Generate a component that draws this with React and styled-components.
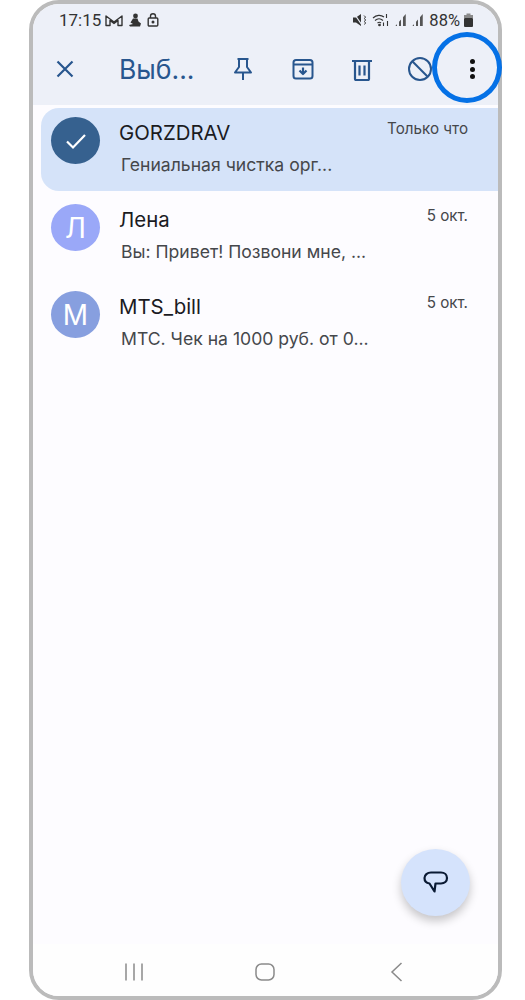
import styled, { createGlobalStyle } from 'styled-components'

const GlobalStyle = createGlobalStyle`
  html, body {
    margin: 0;
    padding: 0;
    background: #ffffff;
  }
  body {
    font-family: Inter, Roboto, "Noto Sans", "Liberation Sans", sans-serif;
  }
`

const chats = [
  { id: 1, name: 'GORZDRAV', time: 'Только что', text: 'Гениальная чистка орг...', selected: true },
  { id: 2, name: 'Лена', letter: 'Л', time: '5 окт.', text: 'Вы: Привет! Позвони мне, ...', color: '#9aa8f8' },
  { id: 3, name: 'MTS_bill', letter: 'M', time: '5 окт.', text: 'МТС. Чек на 1000 руб. от 0...', color: '#879fdf' },
]

const App = () => (
  <>
    <GlobalStyle />
    <Phone>
      <Header>
        <StatusBar>
          <StatusGroup>
            <Clock>17:15</Clock>
            <svg width="18" height="13" viewBox="0 0 18 13" fill="none" stroke="#333" strokeWidth="1.400" strokeLinejoin="round">
              <path d="M1 11.500V2l8 6 8-6v9.500h-4V6.500L9 9.500l-4-3v5z" />
            </svg>
            <svg width="16" height="14" viewBox="0 0 16 14" fill="#333">
              <circle cx="8.500" cy="3" r="2.400" />
              <path d="M6 5.500h4.500l1 3 2.500 2-1 3H3l-1-1.500 4-1-2.500-1.500L6 5.500z" />
            </svg>
            <svg width="12" height="14" viewBox="0 0 12 14" fill="none" stroke="#333" strokeWidth="1.400">
              <rect x="1.200" y="5" width="9.600" height="8" rx="1" />
              <path d="M3.500 5V3.200a2.500 2.500 0 0 1 5 0V5" />
              <circle cx="6" cy="9" r="0.800" fill="#333" />
            </svg>
          </StatusGroup>
          <StatusGroup>
            <svg width="15" height="14" viewBox="0 0 15 14" fill="#333">
              <path d="M0 4.500h3L8 1v12L3 9.500H0z" />
              <path d="M1 0.500l9 13" stroke="#edf0f8" strokeWidth="1.300" />
              <path d="M11 2.500l1.500 1.500-1 1.500 1 1.500-1 1.500 1 1.500-1 1.500" stroke="#333" strokeWidth="1" fill="none" />
            </svg>
            <svg width="19" height="14" viewBox="0 0 19 14" fill="none" stroke="#333" strokeWidth="1.100">
              <path d="M1 5c3.500-3.300 8-3.300 11-1M3 7.500c2.500-2.200 5.500-2.200 8 0M5.500 10c1.200-1 2.500-1 3.500 0" />
              <circle cx="7.500" cy="12" r="0.800" fill="#333" />
              <path d="M14.500 1v4M11.500 9.500v3.500M15.500 8v5" />
            </svg>
            <Signal />
            <Signal />
            <Battery>88%</Battery>
            <svg width="9" height="14" viewBox="0 0 9 14">
              <rect x="2.500" y="0.500" width="4" height="2" fill="#8a8a8a" />
              <rect x="0" y="2" width="9" height="3" fill="#8a8a8a" />
              <rect x="0" y="5" width="9" height="9" rx="1" fill="#333" />
            </svg>
          </StatusGroup>
        </StatusBar>
        <Toolbar>
          <ToolIcon $gap={0}>
            <svg width="20" height="20" viewBox="0 0 20 20" fill="none" stroke="#28568e" strokeWidth="2.200">
              <path d="M2.500 2.500l15 15M17.500 2.500l-15 15" />
            </svg>
          </ToolIcon>
          <Title>Выб...</Title>
          <ToolIcon $gap={40}>
            <svg width="20" height="24" viewBox="0 0 20 24" fill="none" stroke="#28568e" strokeWidth="2" strokeLinejoin="round">
              <path d="M4.500 2h11M6 2v8L2 15.500h16L14 10V2M10 15.500V23" />
            </svg>
          </ToolIcon>
          <ToolIcon $gap={38.500}>
            <svg width="22" height="22" viewBox="0 0 22 22" fill="none" stroke="#28568e" strokeWidth="2" strokeLinejoin="round">
              <rect x="1.500" y="2" width="19" height="18.500" rx="2.500" />
              <path d="M1.500 6.500h19" />
              <path d="M11 9.500v6" strokeWidth="2.200" />
              <path d="M7.500 12.500L11 16l3.500-3.500" strokeWidth="2.200" />
            </svg>
          </ToolIcon>
          <ToolIcon $gap={37.500}>
            <svg width="22" height="23" viewBox="0 0 22 23" fill="none" stroke="#28568e" strokeWidth="2.200" strokeLinejoin="round">
              <path d="M1 3h20M4 3v18a1 1 0 0 0 1 1h12a1 1 0 0 0 1-1V3M8.500 7.500v10M13.500 7.500v10" />
            </svg>
          </ToolIcon>
          <ToolIcon $gap={35}>
            <svg width="24" height="24" viewBox="0 0 24 24" fill="none" stroke="#28568e" strokeWidth="2">
              <circle cx="12" cy="12" r="11" />
              <path d="M4.300 4.300l15.400 15.400" />
            </svg>
          </ToolIcon>
          <MoreDots>
            <i />
            <i />
            <i />
          </MoreDots>
        </Toolbar>
        <Highlight />
      </Header>
      <ChatList>
        {chats.map((chat) => (
          <ChatRow key={chat.id} $selected={chat.selected}>
            {chat.selected ? (
              <Avatar $color="#36618f">
                <svg width="22" height="18" viewBox="0 0 22 18" fill="none" stroke="#fff" strokeWidth="2.200">
                  <path d="M2 9.500l6 6L20 3" />
                </svg>
              </Avatar>
            ) : (
              <Avatar $color={chat.color}>{chat.letter}</Avatar>
            )}
            <ChatBody>
              <ChatTop>
                <ChatName>{chat.name}</ChatName>
                <ChatTime>{chat.time}</ChatTime>
              </ChatTop>
              <ChatText>{chat.text}</ChatText>
            </ChatBody>
          </ChatRow>
        ))}
        <Fab>
          <svg width="26" height="23" viewBox="0 0 26 23" fill="none" stroke="#0a1a33" strokeWidth="2.200" strokeLinejoin="round">
            <path d="M8 1.500h10c3.500 0 6 2.200 6 5.500s-2.500 5.500-6 5.500h-5.500l-1 8-5-8C3.500 12 1.500 10 1.500 7S4.300 1.500 8 1.500z" />
          </svg>
        </Fab>
      </ChatList>
      <NavBar>
        <svg width="20" height="18" viewBox="0 0 20 18" fill="none" stroke="#8a8a8a" strokeWidth="1.500">
          <path d="M2 0.500v17M10 0.500v17M18 0.500v17" />
        </svg>
        <svg width="20" height="18" viewBox="0 0 20 18" fill="none" stroke="#8a8a8a" strokeWidth="1.500">
          <rect x="1" y="1" width="18" height="16" rx="5.500" />
        </svg>
        <svg width="13" height="20" viewBox="0 0 13 20" fill="none" stroke="#8a8a8a" strokeWidth="1.500">
          <path d="M11.500 1L2 10l9.500 9" />
        </svg>
      </NavBar>
    </Phone>
  </>
)

export default App

const Phone = styled.div`
  box-sizing: border-box;
  width: 473px;
  height: 1000px;
  margin-left: 29px;
  border: 4px solid #bbbbbb;
  border-radius: 30px;
  background: #fdfcff;
  display: flex;
  flex-direction: column;
`

const Header = styled.header`
  position: relative;
  height: 101px;
  flex-shrink: 0;
  background: #edf0f8;
  border-radius: 26px 26px 0 0;
`

const StatusBar = styled.div`
  display: flex;
  justify-content: space-between;
  align-items: center;
  height: 32px;
  padding: 0 25px 0 26px;
`

const StatusGroup = styled.div`
  display: flex;
  align-items: center;
  gap: 4px;
`

const Clock = styled.span`
  font-family: Roboto, sans-serif;
  font-size: 17px;
  color: #333333;
`

const Battery = styled.span`
  font-family: Roboto, sans-serif;
  font-size: 16.500px;
  color: #333333;
`

const Signal = styled.span`
  width: 13px;
  height: 12px;
  background: linear-gradient(to right, #555 0 2px, transparent 2px 4px, #555 4px 6px, transparent 6px 8px, #555 8px 10px);
  clip-path: polygon(0 100%, 80% 0, 80% 100%);
`

const Toolbar = styled.div`
  display: flex;
  align-items: center;
  height: 66px;
  padding-left: 22px;
`

const ToolIcon = styled.span`
  display: flex;
  align-items: center;
  justify-content: center;
  margin-left: ${(p) => p.$gap}px;
`

const Title = styled.h1`
  margin: 0 0 0 44px;
  font-size: 26.500px;
  font-weight: 400;
  color: #28568e;
  line-height: 1;
  width: 74px;
  white-space: nowrap;
`

const MoreDots = styled.span`
  display: flex;
  flex-direction: column;
  gap: 2.500px;
  margin-left: 37.500px;

  i {
    display: block;
    width: 5px;
    height: 5px;
    border-radius: 50%;
    background: #111111;
  }
`

const Highlight = styled.span`
  position: absolute;
  top: 28px;
  right: -4px;
  width: 70px;
  height: 71px;
  box-sizing: border-box;
  border: 5px solid #0571e6;
  border-radius: 50%;
`

const ChatList = styled.main`
  position: relative;
  flex: 1;
  padding-top: 3px;
`

const ChatRow = styled.div`
  display: flex;
  align-items: flex-start;
  gap: 19px;
  height: 83px;
  padding: 9px 30px 0 10px;
  box-sizing: border-box;
  margin-left: 8px;
  margin-bottom: 4px;
  border-radius: 18px 0 0 18px;
  background: ${(p) => (p.$selected ? '#d5e3f9' : 'transparent')};
`

const Avatar = styled.div`
  width: 49px;
  height: 47px;
  flex-shrink: 0;
  border-radius: 50%;
  display: flex;
  align-items: center;
  justify-content: center;
  background: ${(p) => p.$color};
  color: #ffffff;
  font-size: 28px;
`

const ChatBody = styled.div`
  flex: 1;
  min-width: 0;
  padding-top: 4px;
  display: flex;
  flex-direction: column;
  gap: 10px;
`

const ChatTop = styled.div`
  display: flex;
  justify-content: space-between;
  align-items: flex-start;
`

const ChatName = styled.span`
  font-size: 20.400px;
  line-height: 24px;
  color: #1b1b1f;
`

const ChatTime = styled.span`
  font-size: 15.200px;
  line-height: 20px;
  margin-top: -2px;
  color: #45474b;
`

const ChatText = styled.span`
  font-size: 17.600px;
  line-height: 20px;
  color: #45474b;
  margin-left: 2px;
  white-space: nowrap;
`

const Fab = styled.button`
  position: absolute;
  right: 28px;
  bottom: 28px;
  width: 69px;
  height: 67px;
  padding: 0;
  border: 0;
  border-radius: 50%;
  background: #d5e3fc;
  box-shadow: 0 5px 10px rgba(0, 0, 0, 0.22);
  display: flex;
  align-items: center;
  justify-content: center;
`

const NavBar = styled.nav`
  height: 52px;
  flex-shrink: 0;
  background: #fefefe;
  border-radius: 0 0 26px 26px;
  display: grid;
  grid-template-columns: 132px 129px 135px;
  justify-items: center;
  align-items: center;
  padding: 4px 0 0 35px;
  box-sizing: border-box;
`
